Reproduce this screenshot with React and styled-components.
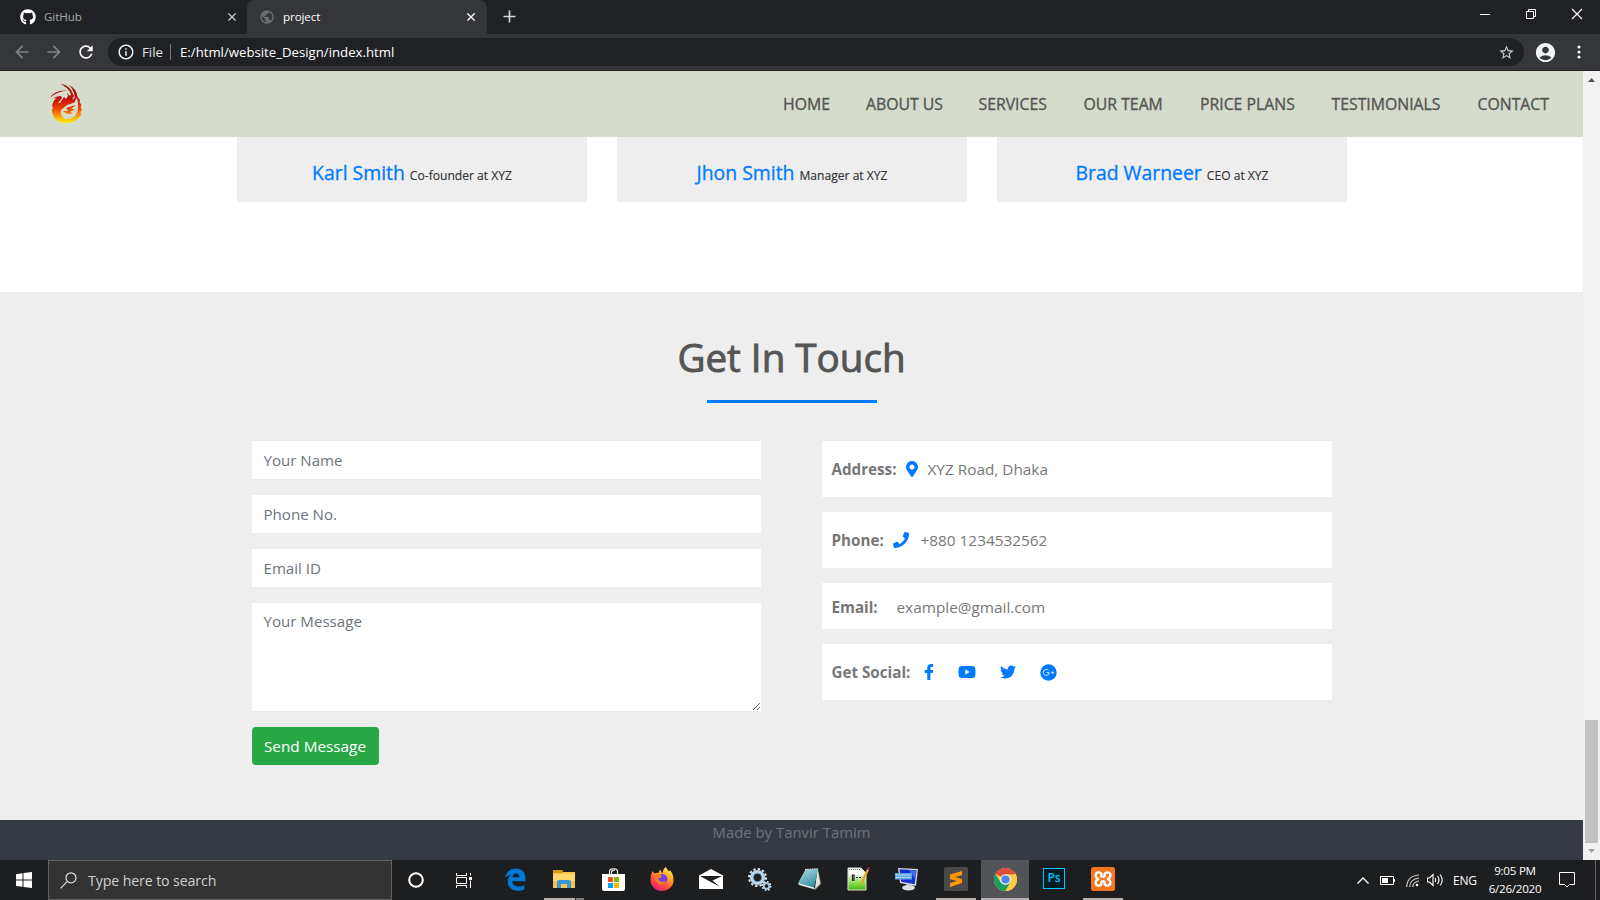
import React from "react";
import styled, { createGlobalStyle } from "styled-components";
import { FaMapMarkerAlt, FaPhone, FaFacebookF, FaYoutube, FaTwitter, FaGithub } from "react-icons/fa";
import { MdAccountCircle, MdRefresh, MdArrowBack, MdArrowForward, MdInfoOutline, MdStarBorder, MdPublic } from "react-icons/md";

const GlobalStyle = createGlobalStyle`
  * { box-sizing: border-box; }
  body { margin: 0; overflow: hidden; font-family: "Segoe UI", "Open Sans", "Noto Sans", sans-serif; }
  svg { display: block; flex: none; }
`;

const Screen = styled.div`
  width: 1600px;
  height: 900px;
  display: flex;
  flex-direction: column;
  overflow: hidden;
`;

/* Browser chrome */
const TabStrip = styled.div`
  height: 34px;
  flex: none;
  display: flex;
  background: #202124;
  color: #fff;
`;
const Tab = styled.div`
  width: ${(p) => p.$width}px;
  height: 34px;
  display: flex;
  align-items: center;
  padding: 0 ${(p) => (p.$active ? 12 : 11)}px 0 ${(p) => (p.$active ? 12 : 20)}px;
  border-radius: ${(p) => (p.$active ? "8px 8px 0 0" : "0")};
  background: ${(p) => (p.$active ? "#35363a" : "transparent")};
  color: ${(p) => (p.$active ? "#fff" : "#a5a8ac")};
  font-size: 11.6px;
  letter-spacing: -0.1px;
`;
const TabTitle = styled.span`
  flex: 1;
  margin-left: 8px;
  padding-bottom: 2px;
`;
const NewTab = styled.div`
  padding: 10px 0 0 16px;
  flex: 1;
`;
const WindowButtons = styled.div`
  display: flex;
  gap: 34px;
  padding: 8px 17px 0 0;
`;
const Toolbar = styled.div`
  height: 37px;
  flex: none;
  display: flex;
  align-items: center;
  background: #35363a;
  border-bottom: 1px solid #262225;
  padding: 0 19px 0 12px;
  color: #f1f3f4;
`;
const NavIcon = styled.div`
  width: 32px;
  color: ${(p) => (p.$dim ? "#808387" : "#fff")};
`;
const AddressBar = styled.div`
  flex: 1;
  height: 28px;
  border-radius: 14px;
  background: #202124;
  display: flex;
  align-items: center;
  padding: 0 9px 0 9px;
  font-size: 13.2px;
`;
const Scheme = styled.span`
  box-sizing: content-box;
  width: 20px;
  margin-left: 7px;
  padding-right: 8px;
  border-right: 1px solid #75777b;
  color: #e1e3e6;
  line-height: 16px;
`;
const Url = styled.span`
  flex: 1;
  margin-left: 9px;
  color: #fff;
`;
const Profile = styled.div`
  margin: 0 20px 0 10px;
`;

/* Web page */
const Viewport = styled.div`
  flex: 1;
  display: flex;
  min-height: 0;
`;
const Page = styled.div`
  width: 1583px;
  display: flex;
  flex-direction: column;
  background: #fff;
`;
const Scrollbar = styled.div`
  width: 17px;
  display: flex;
  flex-direction: column;
  align-items: center;
  justify-content: space-between;
  background: #f1f1f1;
  padding: 7px 0 7px;
`;
const Thumb = styled.div`
  width: 13px;
  height: 123px;
  margin: auto 0 6px;
  background: #c1c1c1;
`;
const Navbar = styled.nav`
  height: 66px;
  flex: none;
  display: flex;
  align-items: center;
  justify-content: space-between;
  padding: 0 0 0 49px;
  background: #d6dccc;
`;
const Menu = styled.div`
  width: 800px;
  display: flex;
`;
const MenuLink = styled.a`
  width: ${(p) => p.$width}px;
  flex: none;
  color: #555;
  font-size: 15.8px;
  -webkit-text-stroke: 0.35px #555;
  white-space: nowrap;
`;
const Team = styled.section`
  height: 155px;
  flex: none;
  display: flex;
  gap: 30px;
  padding-left: 237px;
`;
const Member = styled.div`
  width: 350px;
  height: 65px;
  display: flex;
  justify-content: center;
  align-items: baseline;
  gap: 5px;
  padding-top: 23px;
  background: #eee;
  line-height: 26px;
`;
const MemberName = styled.span`
  color: #007bff;
  font-size: 19.4px;
  -webkit-text-stroke: 0.3px #007bff;
`;
const MemberRole = styled.span`
  color: #333;
  font-size: 12.1px;
  -webkit-text-stroke: 0.15px #333;
`;
const Contact = styled.section`
  flex: 1;
  background: #eee;
  display: flex;
  flex-direction: column;
  align-items: center;
`;
const Heading = styled.h1`
  margin: 35px 0 0;
  height: 73px;
  line-height: 60px;
  color: #555;
  font-size: 38.6px;
  font-weight: 400;
  -webkit-text-stroke: 0.9px #555;
`;
const Rule = styled.div`
  width: 170px;
  height: 3px;
  background: #007bff;
`;
const Columns = styled.div`
  width: 1080px;
  display: flex;
  justify-content: space-between;
  margin-top: 38px;
`;
const Form = styled.form`
  width: 509px;
  display: flex;
  flex-direction: column;
  align-items: flex-start;
  gap: 16px;
`;
const fieldStyle = `
  width: 100%;
  border: 0;
  border-radius: 0;
  padding: 6px 12px;
  background: #fff;
  font-family: inherit;
  font-size: 15.1px;
  line-height: 24px;
  &::placeholder { color: #6c757d; opacity: 1; }
`;
const Field = styled.input`
  ${fieldStyle}
  height: 38px;
`;
const Message = styled.textarea`
  ${fieldStyle}
  height: 108px;
  display: block;
`;
const Submit = styled.button`
  width: 127px;
  height: 38px;
  padding: 0;
  border: 0;
  border-radius: 4px;
  background: #28a745;
  color: #fff;
  font-family: inherit;
  font-size: 15.3px;
  white-space: nowrap;
`;
const Details = styled.div`
  width: 510px;
  display: flex;
  flex-direction: column;
  gap: 15px;
`;
const Detail = styled.div`
  height: ${(p) => p.$height || 56}px;
  display: flex;
  align-items: center;
  padding: ${(p) => (p.$height ? 3 : 1)}px 10px 1px;
  background: #fff;
  color: #777;
  font-size: 15.35px;
`;
const Label = styled.strong`
  width: ${(p) => p.$width}px;
  flex: none;
  font-size: 15.2px;
  font-weight: 700;
  white-space: nowrap;
`;
const Glyph = styled.span`
  color: #007bff;
  width: ${(p) => p.$width}px;
  flex: none;
`;
const Footer = styled.footer`
  height: 40px;
  flex: none;
  background: #363a43;
  color: #6c757d;
  text-align: center;
  font-size: 14.9px;
  line-height: 25px;
`;

/* Taskbar */
const Taskbar = styled.div`
  height: 40px;
  flex: none;
  display: flex;
  background: #1d1e20;
  color: #fff;
`;
const Slot = styled.div`
  width: ${(p) => p.$width || 48}px;
  height: 40px;
  flex: none;
  display: flex;
  align-items: center;
  justify-content: center;
`;
const SearchBox = styled.div`
  width: 344px;
  height: 40px;
  display: flex;
  align-items: center;
  gap: 11px;
  padding-left: 11px;
  background: #333;
  border: 1px solid #636363;
  color: #cfcfcf;
  font-size: 14.2px;
  letter-spacing: -0.12px;
`;
const Apps = styled.div`
  display: flex;
  gap: 1px;
  margin-left: 3px;
`;
const AppSlot = styled(Slot)`
  background: ${(p) => (p.$active ? "#535459" : "transparent")};
  flex-direction: column;
  justify-content: flex-end;
`;
const AppIcon = styled.div`
  height: 38px;
  display: flex;
  align-items: center;
`;
const RunMark = styled.div`
  width: ${(p) => p.$width || 0}px;
  height: 2px;
  background: ${(p) => (p.$stacked ? "linear-gradient(90deg,#b3b0ae 31px,#2a2a2a 31px,#2a2a2a 32px,#7d7b7a 32px)" : "#b3b0ae")};
`;
const Tray = styled.div`
  margin-left: auto;
  display: flex;
  align-items: center;
`;
const Language = styled.span`
  width: 36px;
  margin-left: 7px;
  font-size: 12px;
  letter-spacing: -0.2px;
`;
const Clock = styled.div`
  width: 52px;
  display: flex;
  flex-direction: column;
  align-items: center;
  font-size: 11.6px;
  line-height: 18px;
  white-space: nowrap;
  letter-spacing: -0.25px;
`;
const Notice = styled.div`
  margin: 0 20px 0 18px;
`;
const ShowDesktop = styled.div`
  width: 5px;
  height: 40px;
  border-left: 1px solid #666;
`;

const Cross = ({ size = 8, width = 1.6, color = "#fff" }) => (
  <svg width={size} height={size} viewBox="0 0 10 10">
    <path d="M.5 .5l9 9M9.5 .5l-9 9" stroke={color} strokeWidth={width} />
  </svg>
);

const Phoenix = () => (
  <svg width="34" height="42" viewBox="0 0 34 42">
    <defs>
      <linearGradient id="fire" gradientUnits="userSpaceOnUse" x1="0" y1="0" x2="0" y2="40">
        <stop offset="0" stopColor="#8e1410" />
        <stop offset=".4" stopColor="#c4100a" />
        <stop offset=".62" stopColor="#ea3c05" />
        <stop offset=".82" stopColor="#f99a08" />
        <stop offset="1" stopColor="#fff200" />
      </linearGradient>
    </defs>
    <g fill="url(#fire)">
      <path d="M11 1Q18 1 22 7L25 13L23 17L27 14L26 19Q22 21 18 22L12 27Q11 33 16 36Q24 37 28 30Q30 24 28.500 17L27 12L31 17L30.500 19L32.500 22L31.500 24L33 27L31.500 29L32 32Q27 40 17 40C8 40 3 34 3 27L4 24L3 23Q4 17 8 15L4 15.500Q8 12.500 12 13L13 15L9 20L11 20L15 14L17 16L19 13L18 10L21 13L22 11Q19 4 11 1Z" />
      <path d="M1 15Q5 6.500 19 7.500Q8 8 1 15ZM20 2Q28 6 28.500 14L26 17Q26 8 20 2Z" />
      <path d="M17 25L27 22L22 26L26 26L21 29L24 30Q18 33 14 28L19 28Z" />
    </g>
  </svg>
);

const GooglePlus = () => (
  <svg width="17" height="17" viewBox="0 0 17 17">
    <circle cx="8.5" cy="8.5" r="8.2" fill="#007bff" />
    <path d="M8.500 6.400A3 3 0 1 0 9.300 8.700H6.600M11.400 8.600h2.600M12.700 7.300v2.600" fill="none" stroke="#d9eaff" strokeWidth="1" />
  </svg>
);

const Edge = () => (
  <svg width="21" height="23" viewBox="0 0 21 23">
    <path fill="#0078d7" d="M.4 9.7C1.4 4 5.200.5 10.800.5c6 0 9.700 4.200 9.700 10.300v2.400H7.300c.2 3.700 3.200 5.300 6.500 5.300 2.200 0 4-.6 5.600-1.600v4.300c-1.800 1-4 1.500-6.600 1.500-6 0-10-3.400-10-9 0-3.800 2.200-6.800 5.200-8.300C6.300 6.500 3 7.200.4 9.700zm7-.4h7c0-2.500-1.100-3.900-3.300-3.900-2 0-3.400 1.600-3.700 3.900z" />
  </svg>
);

const Folder = () => (
  <svg width="22" height="18" viewBox="0 0 22 18">
    <path d="M0 0h9l1 2h12v16H0z" fill="#f7c64b" />
    <path d="M0 0h9l1 2-1 1H0z" fill="#d99a13" />
    <path d="M0 4h22v7H0z" fill="#ffd96b" />
    <path d="M4 18v-6q0-2 2-2h10q2 0 2 2v6h-4v-4H8v4z" fill="#3b97dd" />
  </svg>
);

const Store = () => (
  <svg width="23" height="23" viewBox="0 0 23 23">
    <path d="M7.500 6V3.500Q7.500.8 11.500.8T15.500 3.500V6M9.500 6V4Q10 2 13 2" fill="none" stroke="#fff" strokeWidth="1.1" />
    <path d="M0 6h23v15q0 2-2 2H2q-2 0-2-2z" fill="#fff" />
    <path fill="#f25022" d="M6 9h5v5H6z" /><path fill="#7fba00" d="M12 9h5v5h-5z" />
    <path fill="#00a4ef" d="M6 15h5v5H6z" /><path fill="#ffb900" d="M12 15h5v5h-5z" />
  </svg>
);

const Firefox = () => (
  <svg width="24" height="24" viewBox="0 0 24 24">
    <defs>
      <linearGradient id="fox" x1=".8" y1="0" x2=".25" y2="1">
        <stop offset="0" stopColor="#fff44f" /><stop offset=".4" stopColor="#ff9a1f" />
        <stop offset=".7" stopColor="#ff4a3f" /><stop offset="1" stopColor="#e31587" />
      </linearGradient>
    </defs>
    <path fill="url(#fox)" d="M2.500 4l2 2.500q2-1 4-.5Q9 3.500 10.500 2.500 10.500 5 13 6q-.5-4 3-6 1 3 3.500 4.500L20 3q4 5 3.500 11A11.500 10.500 0 0 1 .5 13Q.3 8 2.500 4z" />
    <circle cx="12.300" cy="12" r="5" fill="#7542e5" />
    <path d="M5 8q4-2 7 1-1 2-4 2.500 1 3 4 3.500 3 0 4-1-2 4-6 3.500Q5 16 5 8z" fill="#ff7b22" />
  </svg>
);

const Mail = () => (
  <svg width="24" height="20" viewBox="0 0 24 20">
    <path d="M12 0l12 6.500V20H0V6.500z" fill="#fff" />
    <path d="M1 7H23L13.500 11.500l7 6L10 12z" fill="#1d1e20" />
  </svg>
);

const Gears = () => (
  <svg width="24" height="23" viewBox="0 0 24 23">
    <circle cx="9.500" cy="9.500" r="5.800" fill="none" stroke="#bdd5e8" strokeWidth="3.600" />
    <circle cx="9.500" cy="9.500" r="4.200" fill="none" stroke="#5e9bcb" strokeWidth=".8" />
    <circle cx="9.500" cy="9.500" r="8.500" fill="none" stroke="#e2edf5" strokeWidth="2" strokeDasharray="2.300 2.150" />
    <circle cx="18.500" cy="18" r="2.800" fill="none" stroke="#a8cbe5" strokeWidth="1.900" />
    <circle cx="18.500" cy="18" r="4.300" fill="none" stroke="#e4eef5" strokeWidth="1.400" strokeDasharray="1.700 1.670" />
  </svg>
);

const Notepad = () => (
  <svg width="23" height="22" viewBox="0 0 23 22">
    <defs><linearGradient id="pad" x1="0" y1="0" x2=".6" y2="1"><stop offset="0" stopColor="#b9e0e4" /><stop offset="1" stopColor="#318fa5" /></linearGradient></defs>
    <path d="M20 1l3 15-6 6z" fill="#a99a79" />
    <path d="M19.500 1l2.500 14-5 6z" fill="#dfe6e8" />
    <path d="M7.500 1.500L20 1l-4 19L0 15z" fill="url(#pad)" />
    <path d="M0 15l16 4.500 1 2L1 17z" fill="#e8eded" />
    <path d="M7 1.500L20 .8" stroke="#e2e7e8" strokeWidth="1.200" strokeDasharray="1.500 .8" />
  </svg>
);

const NotepadPlus = () => (
  <svg width="23" height="24" viewBox="0 0 23 24">
    <defs><linearGradient id="npp" x1="0" y1="0" x2="0" y2="1"><stop offset=".25" stopColor="#f7faf2" /><stop offset=".75" stopColor="#7bd53c" /><stop offset="1" stopColor="#48b512" /></linearGradient></defs>
    <path d="M1 1h13l5 5v17H1z" fill="url(#npp)" stroke="#d9ddd6" />
    <path d="M2 2.500h12" stroke="#888" strokeDasharray="1 1" />
    <path d="M5.500 14V8h1.500v6M9 10.500h2M12 10.500h2" fill="none" stroke="#222" strokeWidth="1.200" />
    <path d="M13 18l1-4 6-12 2 1-6 13z" fill="#e5aa28" /><path d="M20 2l1-2 2 1-1 2z" fill="#933" />
  </svg>
);

const Monitor = () => (
  <svg width="24" height="23" viewBox="0 0 24 23">
    <path d="M11 15h6l1 5h-7z" fill="#a5a8aa" /><ellipse cx="13.500" cy="19.800" rx="6.500" ry="2.800" fill="#dcdfe1" />
    <path d="M3 0l20 1-2 17-16-3z" fill="#d7d9dc" /><path d="M4.500 1.300l17 1-1.800 14-13.500-2.600z" fill="#1532d0" />
    <path d="M14 2l7.500.5-1 9z" fill="#3f67ea" />
    <path d="M0 5h17v6.500H0z" fill="#5ea6e0" /><path d="M1 7h15M1 9.500h15" stroke="#e5f3ff" strokeDasharray="1.300 .8" />
  </svg>
);

const Sublime = () => (
  <svg width="24" height="24" viewBox="0 0 24 24">
    <rect width="24" height="24" rx="1.500" fill="#4a4a4a" />
    <path fill="#ff9800" d="M6 7.500L18 4v4L11 10l7 2v4L6 20v-4l7-2-7-2z" />
  </svg>
);

const Chrome = () => (
  <svg width="23" height="23" viewBox="0 0 24 24">
    <circle cx="12" cy="12" r="12" fill="#ffcd40" />
    <path d="M12 12L1.600 6A12 12 0 0 1 22.400 6z" fill="#dd4b3e" />
    <path d="M1.600 6A12 12 0 0 0 12 24l5-9H7z" fill="#1a9f5c" />
    <path d="M12 6.500h10.700A12 12 0 0 1 12 24l5-9z" fill="#ffcd40" />
    <circle cx="12" cy="12" r="5.500" fill="#f4f4f4" /><circle cx="12" cy="12" r="4.300" fill="#4586ef" />
  </svg>
);

const PsBadge = styled.div`
  width: 22px;
  height: 21px;
  margin-top: -2px;
  border: 1.500px solid #00c8ff;
  background: #001d26;
  color: #00c8ff;
  font-size: 12px;
  font-weight: 600;
  line-height: 18px;
  text-align: center;
`;

const Xampp = () => (
  <svg width="24" height="24" viewBox="0 0 24 24">
    <rect width="24" height="24" rx="2.500" fill="#f37623" />
    <path d="M10.300 9V6.800Q9 5 6.500 5.500Q4.200 6.500 4.700 9Q5.200 11.300 7.300 12Q5.200 12.700 4.700 15Q4.200 17.500 6.500 18.500Q9 19 10.300 17.200V15Q12 13.500 13.700 15V17.200Q15 19 17.500 18.500Q19.800 17.500 19.300 15Q18.800 12.700 16.700 12Q18.800 11.300 19.300 9Q19.800 6.500 17.500 5.500Q15 5 13.700 6.800V9Q12 10.500 10.300 9Z" fill="none" stroke="#fff" strokeWidth="2.400" strokeLinejoin="round" />
  </svg>
);

const menu = [
  ["HOME", 83], ["ABOUT US", 112.5], ["SERVICES", 105], ["OUR TEAM", 116.5],
  ["PRICE PLANS", 131.5], ["TESTIMONIALS", 146], ["CONTACT", 75],
];

const team = [
  ["Karl Smith", "Co-founder at XYZ"],
  ["Jhon Smith", "Manager at XYZ"],
  ["Brad Warneer", "CEO at XYZ"],
];

const apps = [
  { icon: <Edge /> },
  { icon: <Folder />, mark: 40, stacked: true },
  { icon: <Store /> },
  { icon: <Firefox /> },
  { icon: <Mail /> },
  { icon: <Gears /> },
  { icon: <Notepad /> },
  { icon: <NotepadPlus /> },
  { icon: <Monitor /> },
  { icon: <Sublime />, mark: 40 },
  { icon: <Chrome />, mark: 48, active: true },
  { icon: <PsBadge>Ps</PsBadge> },
  { icon: <Xampp />, mark: 40 },
];

export default function App() {
  return (
    <Screen>
      <GlobalStyle />
      <TabStrip>
        <Tab $width={247}>
          <FaGithub size={16} color="#fff" />
          <TabTitle>GitHub</TabTitle>
          <Cross color="#c4c6c9" />
        </Tab>
        <Tab $width={240} $active>
          <MdPublic size={16} color="#6b6f74" />
          <TabTitle>project</TabTitle>
          <Cross />
        </Tab>
        <NewTab>
          <svg width="13" height="13" viewBox="0 0 13 13"><path d="M6.500 .5v12M.5 6.500h12" stroke="#d5d6d8" strokeWidth="1.700" /></svg>
        </NewTab>
        <WindowButtons>
          <svg width="12" height="12" viewBox="0 0 12 12"><path d="M1 6.500h10" stroke="#fff" /></svg>
          <svg width="12" height="12" viewBox="0 0 12 12"><path d="M1.500 3.500h7v7h-7zM3.500 3.500v-2h7v7h-2" fill="none" stroke="#fff" /></svg>
          <svg width="12" height="12" viewBox="0 0 12 12"><path d="M1 1l10 10M11 1L1 11" stroke="#fff" strokeWidth="1.100" /></svg>
        </WindowButtons>
      </TabStrip>
      <Toolbar>
        <NavIcon $dim><MdArrowBack size={20} /></NavIcon>
        <NavIcon $dim><MdArrowForward size={20} /></NavIcon>
        <NavIcon><MdRefresh size={20} /></NavIcon>
        <AddressBar>
          <MdInfoOutline size={18} />
          <Scheme>File</Scheme>
          <Url>E:/html/website_Design/index.html</Url>
          <MdStarBorder size={17} color="#c8cace" />
        </AddressBar>
        <Profile><MdAccountCircle size={23} /></Profile>
        <svg width="4" height="14" viewBox="0 0 4 14" fill="#f1f3f4"><circle cx="2" cy="2" r="1.600" /><circle cx="2" cy="7" r="1.600" /><circle cx="2" cy="12" r="1.600" /></svg>
      </Toolbar>

      <Viewport>
        <Page>
          <Navbar>
            <Phoenix />
            <Menu>{menu.map(([name, width]) => <MenuLink key={name} $width={width}>{name}</MenuLink>)}</Menu>
          </Navbar>
          <Team>
            {team.map(([name, role]) => (
              <Member key={name}><MemberName>{name}</MemberName><MemberRole>{role}</MemberRole></Member>
            ))}
          </Team>
          <Contact>
            <Heading>Get In Touch</Heading>
            <Rule />
            <Columns>
              <Form>
                <Field placeholder="Your Name" />
                <Field placeholder="Phone No." />
                <Field placeholder="Email ID" />
                <Message placeholder="Your Message" />
                <Submit type="button">Send Message</Submit>
              </Form>
              <Details>
                <Detail><Label $width={72}>Address:</Label><Glyph $width={24}><FaMapMarkerAlt size={16} /></Glyph>XYZ Road, Dhaka</Detail>
                <Detail><Label $width={61}>Phone:</Label><Glyph $width={28}><FaPhone size={16} /></Glyph>+880 1234532562</Detail>
                <Detail $height={46}><Label $width={65}>Email:</Label>example@gmail.com</Detail>
                <Detail>
                  <Label $width={89}>Get Social:</Label>
                  <Glyph $width={37}><FaFacebookF size={16} /></Glyph>
                  <Glyph $width={42}><FaYoutube size={18} /></Glyph>
                  <Glyph $width={40}><FaTwitter size={16} /></Glyph>
                  <GooglePlus />
                </Detail>
              </Details>
            </Columns>
          </Contact>
          <Footer>Made by Tanvir Tamim</Footer>
        </Page>
        <Scrollbar>
          <svg width="7" height="4" viewBox="0 0 7 4"><path d="M0 4L3.500 0 7 4z" fill="#505050" /></svg>
          <Thumb />
          <svg width="7" height="4" viewBox="0 0 7 4"><path d="M0 0h7L3.500 4z" fill="#a3a3a3" /></svg>
        </Scrollbar>
      </Viewport>

      <Taskbar>
        <Slot>
          <svg width="16" height="16" viewBox="0 0 16 16" fill="#fff"><path d="M0 2.200L6.500 1.300V7.500H0zM7.500 1.100L16 0V7.500H7.500zM0 8.500H6.500V14.800L0 13.900zM7.500 8.500H16V16L7.500 14.900z" /></svg>
        </Slot>
        <SearchBox>
          <svg width="17" height="17" viewBox="0 0 17 17" fill="none" stroke="#e0e0e0" strokeWidth="1.200"><circle cx="11" cy="5.800" r="5" /><path d="M7.400 9.400L.5 16.300" /></svg>
          Type here to search
        </SearchBox>
        <Slot>
          <svg width="16" height="16" viewBox="0 0 16 16"><circle cx="8" cy="8" r="6.800" fill="none" stroke="#fff" strokeWidth="2" /></svg>
        </Slot>
        <Slot>
          <svg width="16" height="15" viewBox="0 0 16 15" fill="none" stroke="#fff"><path d="M.5 0v2.500h10V0M.5 15v-2.500h10V15M.5 4.500h10v6H.5zM14.500 0v2.500M14.500 7.500V15" /><path d="M13 4h3v3h-3z" fill="#fff" stroke="none" /></svg>
        </Slot>
        <Apps>
          {apps.map((app, i) => (
            <AppSlot key={i} $active={app.active}>
              <AppIcon>{app.icon}</AppIcon>
              <RunMark $width={app.mark} $stacked={app.stacked} />
            </AppSlot>
          ))}
        </Apps>
        <Tray>
          <Slot $width={24}><svg width="12" height="7" viewBox="0 0 12 7"><path d="M.5 6.500L6 1l5.500 5.500" fill="none" stroke="#fff" strokeWidth="1.300" /></svg></Slot>
          <Slot $width={25}><svg width="15" height="9" viewBox="0 0 15 9"><path d="M.5 .5h13v8H.5zM14.500 3v3" fill="none" stroke="#fff" /><path d="M2 2h6v5H2z" fill="#fff" /></svg></Slot>
          <Slot $width={24}><svg width="13" height="13" viewBox="0 0 13 13" fill="none" stroke="#ccc" strokeWidth="1.200"><path d="M.7 13Q1 2 13 1M3.700 13Q4 5 13 4M6.700 13Q7 8 13 7" /><circle cx="11" cy="11" r="1.300" fill="#fff" stroke="none" /></svg></Slot>
          <Slot $width={22}><svg width="17" height="14" viewBox="0 0 17 14" fill="none" stroke="#fff" strokeWidth="1.100"><path d="M.5 5v4h2l3.500 3.500v-11L2.500 5zM8 5q1.500 2 0 4M10.500 3q3 4 0 8M13 1.500q4.500 5.500 0 11" /></svg></Slot>
          <Language>ENG</Language>
          <Clock><span>9:05 PM</span><span>6/26/2020</span></Clock>
          <Notice><svg width="16" height="16" viewBox="0 0 16 16"><path d="M.5 .5h15v12h-5L8 15l-2.500-2.500h-5z" fill="none" stroke="#fff" /></svg></Notice>
          <ShowDesktop />
        </Tray>
      </Taskbar>
    </Screen>
  );
}
